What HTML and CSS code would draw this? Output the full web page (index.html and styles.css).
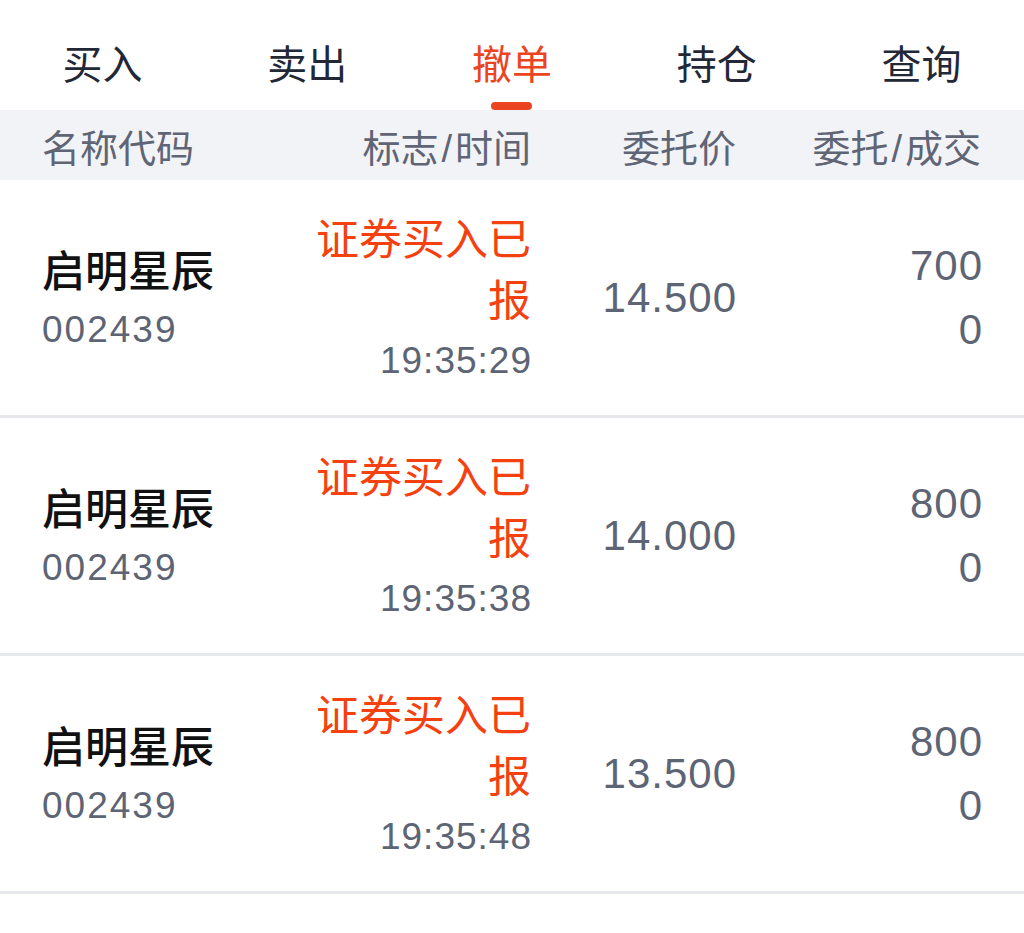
FILE: index.html
```html
<!DOCTYPE html>
<html lang="zh-CN">
<head>
    <meta charset="utf-8">
    <link rel="stylesheet" href="styles.css">
    <title>撤单</title>
</head>
<body>
    <div class="tabs">
        <div class="tab">买入</div>
        <div class="tab">卖出</div>
        <div class="tab active">撤单<span class="bar"></span></div>
        <div class="tab">持仓</div>
        <div class="tab">查询</div>
    </div>

    <div class="head">
        <div>名称代码</div>
        <div class="r">标志<span class="sl">/</span>时间</div>
        <div class="r">委托价</div>
        <div class="r">委托<span class="sl">/</span>成交</div>
    </div>

    <div class="row">
        <div class="name">
            <div class="title">启明星辰</div>
            <div class="code">002439</div>
        </div>
        <div class="state r">
            <div class="flag">证券买入已报</div>
            <div class="time">19:35:29</div>
        </div>
        <div class="price r">14.500</div>
        <div class="qty r">
            <div>700</div>
            <div>0</div>
        </div>
    </div>

    <div class="row">
        <div class="name">
            <div class="title">启明星辰</div>
            <div class="code">002439</div>
        </div>
        <div class="state r">
            <div class="flag">证券买入已报</div>
            <div class="time">19:35:38</div>
        </div>
        <div class="price r">14.000</div>
        <div class="qty r">
            <div>800</div>
            <div>0</div>
        </div>
    </div>

    <div class="row">
        <div class="name">
            <div class="title">启明星辰</div>
            <div class="code">002439</div>
        </div>
        <div class="state r">
            <div class="flag">证券买入已报</div>
            <div class="time">19:35:48</div>
        </div>
        <div class="price r">13.500</div>
        <div class="qty r">
            <div>800</div>
            <div>0</div>
        </div>
    </div>
</body>
</html>
```

FILE: styles.css
```css
* {
    margin: 0;
    padding: 0;
    box-sizing: border-box;
}
body {
    background: #fff;
    font-family: "Liberation Sans", "Noto Sans CJK SC", sans-serif;
    color: #5d6474;
}
.r {
    text-align: right;
}

/* tabs */
.tabs {
    display: grid;
    grid-template-columns: repeat(5, 1fr);
    height: 110px;
}
.tab {
    display: flex;
    flex-direction: column;
    align-items: center;
    padding-top: 45px;
    font-size: 40px;
    line-height: 40px;
    color: #222836;
}
.tab.active {
    color: #ea4520;
}
.bar {
    width: 41px;
    height: 8px;
    margin-top: 17px;
    border-radius: 4px;
    background: #ea4520;
}

/* header */
.head {
    display: grid;
    grid-template-columns: 258px 231px 205px 245px;
    align-items: center;
    height: 70px;
    padding: 0 43px 0 42px;
    background: #f2f3f7;
    font-size: 38px;
    color: #5f6575;
}
.sl {
    padding: 0 3px;
}

/* rows */
.row {
    display: grid;
    grid-template-columns: 258px 231px 205px 245px;
    align-items: center;
    height: 238px;
    padding: 0 43px 0 42px;
    border-bottom: 3px solid #e6e8ec;
}
.name {
    padding-top: 7px;
}
.title {
    font-size: 43px;
    line-height: 58px;
    font-weight: 500;
    color: #111;
}
.code {
    font-size: 37px;
    line-height: 58px;
    letter-spacing: 2px;
}
.state {
    padding-top: 5px;
}
.flag {
    font-size: 43px;
    line-height: 61px;
    color: #f4410f;
}
.time {
    font-size: 37px;
    line-height: 58px;
    letter-spacing: 1px;
    margin-right: -1px;
}
.price {
    font-size: 42px;
    letter-spacing: 1px;
    margin-right: -1px;
}
.qty {
    font-size: 42px;
    line-height: 64px;
    letter-spacing: 1px;
    margin-right: -2px;
}
```
